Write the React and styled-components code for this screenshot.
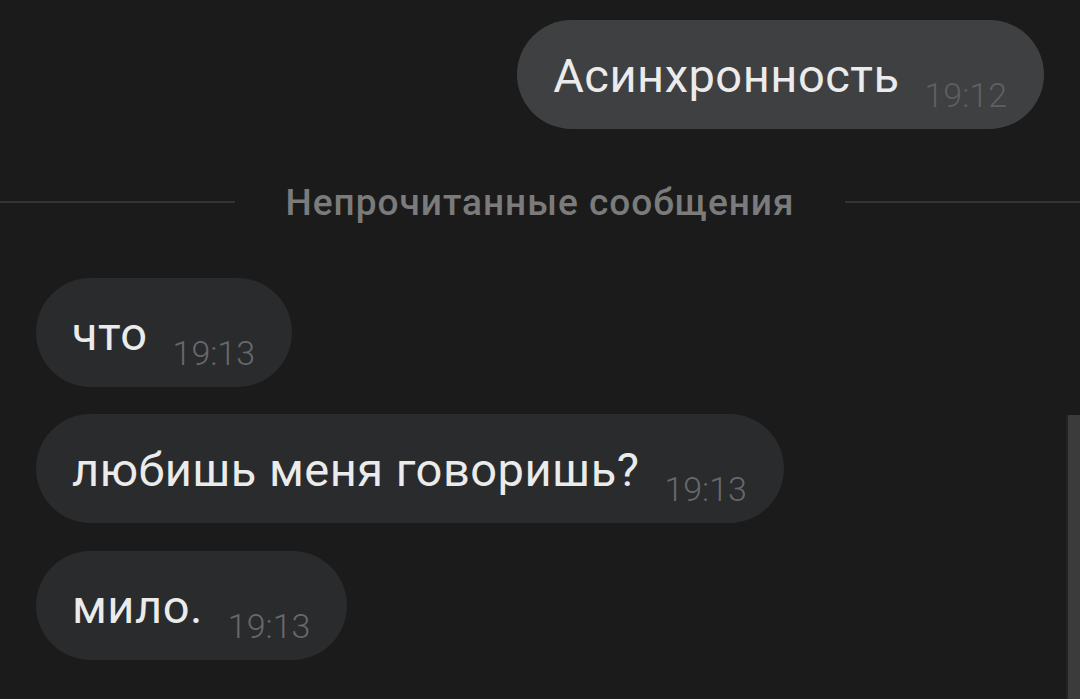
import React from "react";
import styled, { createGlobalStyle } from "styled-components";

const Global = createGlobalStyle`
  html, body { margin: 0; padding: 0; background: #1b1b1b; }
  body { font-family: Roboto, "Noto Sans", sans-serif; overflow: hidden; }
`;

const Screen = styled.div`
  position: relative;
  width: 1080px;
  height: 699px;
  background: #1b1b1b;
  overflow: hidden;
  display: flex;
  flex-direction: column;
  padding-top: 20px;
  box-sizing: border-box;
`;

const Row = styled.div`
  display: flex;
  justify-content: ${(p) => (p.$out ? "flex-end" : "flex-start")};
  padding: 0 36px;
  margin-top: ${(p) => p.$mt || 0}px;
`;

const Bubble = styled.div`
  display: flex;
  align-items: center;
  height: 109px;
  box-sizing: border-box;
  padding: 2px 37px 0 36px;
  border-radius: 55px;
  background: ${(p) => (p.$out ? "#3f4042" : "#2a2b2d")};
`;

const Text = styled.span`
  font-size: 47px;
  line-height: 47px;
  letter-spacing: 0.5px;
  color: #ebebeb;
  white-space: nowrap;
`;

const Time = styled.span`
  align-self: flex-end;
  margin-bottom: 17px;
  margin-left: 25px;
  font-size: 34px;
  line-height: 34px;
  font-weight: 300;
  color: ${(p) => (p.$out ? "#5e5f62" : "#67686b")};
  white-space: nowrap;
`;

const Divider = styled.div`
  display: flex;
  align-items: center;
  gap: 50px;
  margin-top: 56px;
  height: 34px;
`;

const Line = styled.div`
  flex: 1;
  height: 2px;
  background: #343434;
`;

const DividerLabel = styled.span`
  font-size: 37px;
  font-weight: 500;
  letter-spacing: 1px;
  color: #7b7b7b;
  white-space: nowrap;
`;

const Scrollbar = styled.div`
  position: absolute;
  right: 0;
  top: 415px;
  bottom: 0;
  width: 12px;
  background: #3b3b3b;
  border-left: 2px solid #232323;
`;

const messages = [
  { text: "что", time: "19:13", mt: 59 },
  { text: "любишь меня говоришь?", time: "19:13", mt: 27 },
  { text: "мило.", time: "19:13", mt: 28 },
];

export default function App() {
  return (
    <>
      <Global />
      <Screen>
        <Row $out>
          <Bubble $out>
            <Text>Асинхронность</Text>
            <Time $out>19:12</Time>
          </Bubble>
        </Row>
        <Divider>
          <Line />
          <DividerLabel>Непрочитанные сообщения</DividerLabel>
          <Line />
        </Divider>
        {messages.map((m, i) => (
          <Row key={i} $mt={m.mt}>
            <Bubble>
              <Text>{m.text}</Text>
              <Time>{m.time}</Time>
            </Bubble>
          </Row>
        ))}
        <Scrollbar />
      </Screen>
    </>
  );
}
